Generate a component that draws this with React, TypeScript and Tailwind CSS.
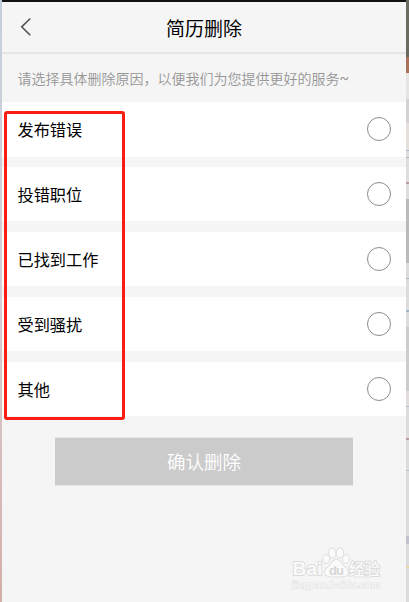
import React, { useState } from 'react';

const reasons = ['发布错误', '投错职位', '已找到工作', '受到骚扰', '其他'];

// Slivers of the windows behind the phone screen: height and colour of each piece
const rightEdge = [
  { height: 'h-[57px]', color: 'bg-[#6a6a60]' },
  { height: 'h-[16px]', color: 'bg-[#a9705a]' },
  { height: 'h-[26px]', color: 'bg-[#e6e4e2]' },
  { height: 'h-[24px]', color: 'bg-[#d5d1d3]' },
  { height: 'h-[27px]', color: 'bg-[#e4dfda]' },
  { height: 'h-[1px]', color: 'bg-[#a9b9cb]' },
  { height: 'h-[6px]', color: 'bg-[#dddddd]' },
  { height: 'h-[1px]', color: 'bg-[#b4b8bd]' },
  { height: 'h-[24px]', color: 'bg-[#dddddd]' },
  { height: 'h-[2px]', color: 'bg-[#b99da0]' },
  { height: 'h-[15px]', color: 'bg-[#dddddd]' },
  { height: 'h-[64px]', color: 'bg-[#bababa]' },
  { height: 'h-[15px]', color: 'bg-[#dcdcdc]' },
  { height: 'h-[1px]', color: 'bg-[#a9b9cb]' },
  { height: 'h-[31px]', color: 'bg-[#dcdcdc]' },
  { height: 'h-[2px]', color: 'bg-[#a3b5c4]' },
  { height: 'h-[15px]', color: 'bg-[#dcdcdc]' },
  { height: 'h-[64px]', color: 'bg-[#cccccc]' },
  { height: 'h-[15px]', color: 'bg-[#e2dcdb]' },
  { height: 'h-[1px]', color: 'bg-[#b4c2d3]' },
  { height: 'h-[31px]', color: 'bg-[#dcdcdc]' },
  { height: 'h-[2px]', color: 'bg-[#b99da0]' },
  { height: 'h-[30px]', color: 'bg-[#dcdcdc]' },
  { height: 'h-[1px]', color: 'bg-[#b4c2d3]' },
  { height: 'h-[65px]', color: 'bg-[#dcdcdc]' },
  { height: 'h-[8px]', color: 'bg-[#c0c1ca]' },
  { height: 'h-[22px]', color: 'bg-[#dcdcdc]' },
  { height: 'h-[2px]', color: 'bg-[#e6d9a8]' },
  { height: 'h-[34px]', color: 'bg-[#dcdcdc]' },
];

const Header: React.FC = () => (
  <header className="flex h-[52px] items-center border-b-2 border-[#e5e5e5] pl-[18px] pr-[42px]">
    <button aria-label="返回" className="flex w-6 items-center">
      <svg width="12" height="20" viewBox="0 0 12 20" fill="none" stroke="#555555" strokeWidth="1.6">
        <path d="M10.3 1.5 1.7 9.8l8.6 8.4" />
      </svg>
    </button>
    <h1 className="flex-1 text-center text-[19px] leading-none text-black">简历删除</h1>
  </header>
);

interface ReasonRowProps {
  label: string;
  checked: boolean;
  onSelect: () => void;
}

const ReasonRow: React.FC<ReasonRowProps> = ({ label, checked, onSelect }) => (
  <button
    role="radio"
    aria-checked={checked}
    onClick={onSelect}
    className="flex h-[54px] w-full items-center justify-between bg-white pl-[15.5px] pr-[15px] text-[16.2px] leading-none text-black first:-mb-px first:h-[55px] first:pb-px"
  >
    <span>{label}</span>
    <span className="flex size-6 items-center justify-center rounded-full border border-[#8c8c8c]">
      {checked && <span className="size-3 rounded-full bg-[#8c8c8c]" />}
    </span>
  </button>
);

const Watermark: React.FC = () => (
  <svg
    className="absolute bottom-2.5 right-[23px]"
    width="94"
    height="46"
    viewBox="0 0 94 46"
    fill="#fafafa"
    stroke="#dcdcdc"
    strokeWidth="1.8"
    paintOrder="stroke"
  >
    <g fontFamily="'Liberation Sans', sans-serif">
      <text x="3.5" y="28.5" fontSize="19" fontWeight="700" textLength="30">Bai</text>
      <path d="M47.5 14c-4 0-5 4-7.5 6.5-2.500 2-4.500 4-4 6.500.5 3 3.500 3.500 11.500 3.500s11-.5 11.500-3.500c.5-2.500-1.500-4.500-4-6.500-2.500-2.500-3.500-6.500-7.500-6.500z" />
      <ellipse cx="37.2" cy="13" rx="3" ry="4" />
      <ellipse cx="43.3" cy="7" rx="3.2" ry="4.5" />
      <ellipse cx="51" cy="7" rx="3.2" ry="4.5" />
      <ellipse cx="57" cy="13" rx="3" ry="4" />
      <text x="40" y="28.5" fontSize="13" fontWeight="700" textLength="15" fill="#d6d6d6" stroke="none">du</text>
      <text x="3" y="42" fontSize="9.5" textLength="88" lengthAdjust="spacingAndGlyphs" strokeWidth="1.2" stroke="#e3e3e3">
        jingyan.baidu.com
      </text>
    </g>
    <text x="60" y="29" fontSize="15.5" fontWeight="500" fontFamily="'Noto Sans CJK SC', sans-serif">
      经验
    </text>
  </svg>
);

export default function App() {
  const [selected, setSelected] = useState<string | null>(null);

  return (
    <div className="flex h-[602px] w-[409px] overflow-hidden bg-[#f5f5f5] font-['Noto_Sans_CJK_SC',sans-serif]">
      <div className="w-0.5 shrink-0 bg-linear-to-b from-[#c3cfdc] via-[#d8cdd2] to-[#d4aea9]" />

      <main className="relative min-w-0 flex-1 border-t-2 border-[#111111]">
        <Header />
        <p className="flex h-12 items-center whitespace-nowrap pl-[15.5px] text-sm leading-none font-[350] text-[#959595]">
          请选择具体删除原因，以便我们为您提供更好的服务
          <span className="font-['Roboto'] font-normal">~</span>
        </p>

        <div role="radiogroup" className="flex flex-col gap-[11px]">
          {reasons.map((reason) => (
            <ReasonRow
              key={reason}
              label={reason}
              checked={selected === reason}
              onSelect={() => setSelected(reason)}
            />
          ))}
        </div>

        <button className="ml-[53px] mt-[21px] flex h-[49px] w-[298px] items-center justify-center border-y border-[#e6e6e6] bg-[#cbcbcb] text-[18.5px] leading-none font-[350] text-white">
          确认删除
        </button>

        {/* highlight around the reason labels */}
        <div className="pointer-events-none absolute left-0.5 top-[109px] h-[309px] w-[121px] rounded-[3px] border-3 border-[#fb1d14]" />
        <Watermark />
      </main>

      <div className="flex w-[3px] shrink-0 flex-col">
        {rightEdge.map((piece, i) => (
          <div key={i} className={`shrink-0 ${piece.height} ${piece.color}`} />
        ))}
      </div>
    </div>
  );
}
